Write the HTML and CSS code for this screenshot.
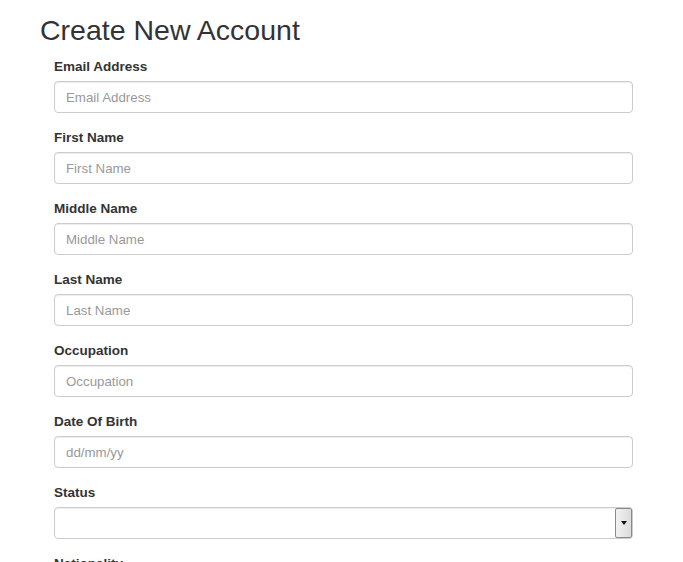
FILE: index.html
```html
<!DOCTYPE html>
<html>
<head>
<meta charset="utf-8">
<link rel="stylesheet" href="styles.css">
</head>
<body>
<div class="page">
  <h1 class="title">Create New Account</h1>
  <form class="form">
    <div class="group">
      <label class="label">Email Address</label>
      <input class="control" type="text" placeholder="Email Address">
    </div>
    <div class="group">
      <label class="label">First Name</label>
      <input class="control" type="text" placeholder="First Name">
    </div>
    <div class="group">
      <label class="label">Middle Name</label>
      <input class="control" type="text" placeholder="Middle Name">
    </div>
    <div class="group">
      <label class="label">Last Name</label>
      <input class="control" type="text" placeholder="Last Name">
    </div>
    <div class="group">
      <label class="label">Occupation</label>
      <input class="control" type="text" placeholder="Occupation">
    </div>
    <div class="group">
      <label class="label">Date Of Birth</label>
      <input class="control" type="text" placeholder="dd/mm/yy">
    </div>
    <div class="group">
      <label class="label">Status</label>
      <div class="select-wrap">
        <select class="control select"><option></option></select>
        <span class="select-btn"><span class="tri"></span></span>
      </div>
    </div>
    <div class="group">
      <label class="label">Nationality</label>
    </div>
  </form>
</div>
</body>
</html>
```
FILE: styles.css
```css
html, body {
  margin: 0;
  padding: 0;
  background: #fff;
}
body {
  font-family: "Liberation Sans", Arial, sans-serif;
  color: #333;
  overflow: hidden;
}
.page {
  padding: 13px 0 0 40px;
  width: 593px;
}
.title {
  font-size: 28.5px;
  font-weight: normal;
  line-height: 34px;
  margin: 0 0 10px 0;
  color: #333;
}
.form {
  padding-left: 14px;
}
.group {
  margin-bottom: 15px;
}
.label {
  display: block;
  font-size: 13.5px;
  font-weight: bold;
  line-height: 19px;
  margin-bottom: 5px;
  color: #333;
}
.control {
  display: block;
  box-sizing: border-box;
  width: 579px;
  height: 32px;
  padding: 5px 11px;
  font-family: "Liberation Sans", Arial, sans-serif;
  font-size: 13.3px;
  color: #555;
  border: 1px solid #ccc;
  border-radius: 4px;
  background: #fff;
  box-shadow: inset 0 1px 1px rgba(0,0,0,0.075);
  outline: none;
}
.control::placeholder {
  color: #999;
}
.select-wrap {
  position: relative;
  width: 579px;
}
.select {
  appearance: none;
  -webkit-appearance: none;
}
.select-btn {
  position: absolute;
  right: 1px;
  top: 1px;
  width: 15px;
  height: 28px;
  border: 1px solid #8a8a8a;
  border-radius: 2px;
  background: linear-gradient(to right, #f2f2f2, #dcdcdc);
  display: flex;
  align-items: center;
  justify-content: center;
}
.tri {
  width: 0;
  height: 0;
  border-left: 3.5px solid transparent;
  border-right: 3.5px solid transparent;
  border-top: 4px solid #111;
}
```
